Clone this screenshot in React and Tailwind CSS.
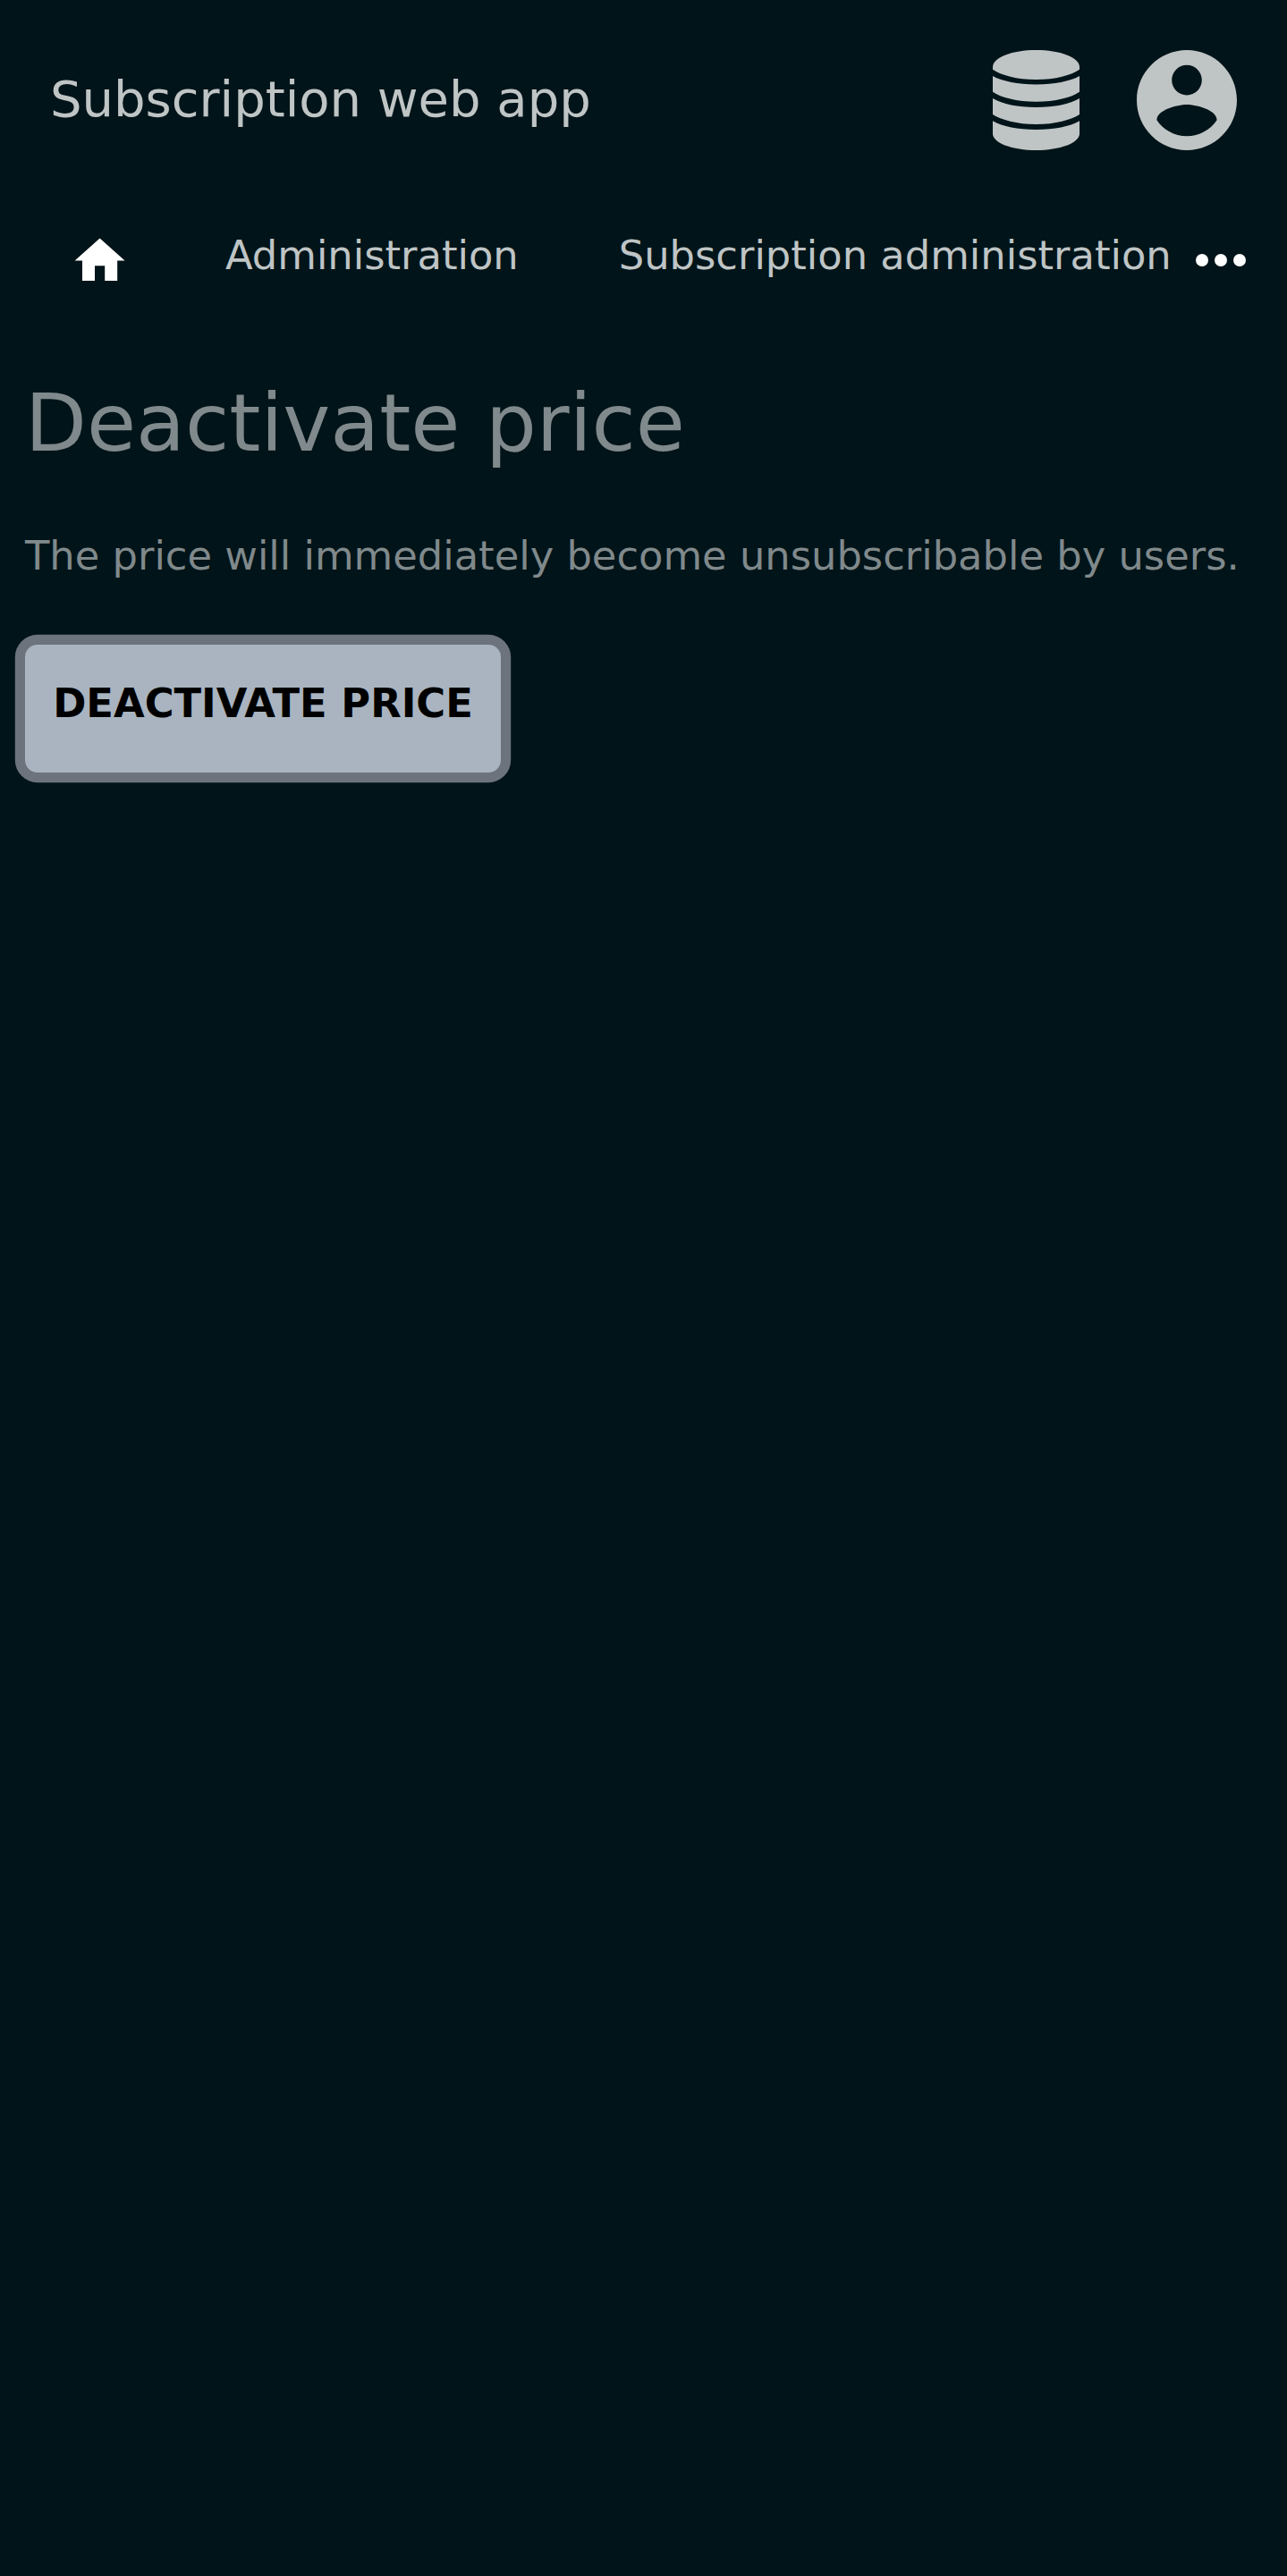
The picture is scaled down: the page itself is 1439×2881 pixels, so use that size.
export default function App() {
  return (
    <div className="h-[2881px] w-full overflow-hidden bg-[#001419] font-['DejaVu_Sans',sans-serif] text-[44.8px] leading-[67.2px] text-[#80898b]">
      <header className="flex h-[224px] items-center justify-between px-[56px] text-[#bfc4c5]">
        <span className="mb-[4px] text-[56px] leading-[67px]">Subscription web app</span>
        <div className="flex items-center gap-[64px]">
          <svg className="h-[112px] w-[97px]" viewBox="0 0 97 112" fill="currentColor">
            <path d="M0 19C0 8 22 0 48.5 0S97 8 97 19V21.7C88 28 70 33 48.5 33S9 28 0 21.7Z" />
            <path d="M0 29C11 35 28 38.4 48.5 38.4S86 35 97 29V46.7C88 53 70 57.7 48.5 57.7S9 53 0 46.7Z" />
            <path d="M0 54C11 60.5 28 64 48.5 64S86 60.5 97 54V72C88 78 70 83 48.5 83S9 78 0 72Z" />
            <path d="M0 79.3C11 85.5 28 89 48.5 89S86 85.5 97 79.3V93.5C97 104 75 112 48.5 112S0 104 0 93.5Z" />
          </svg>
          <svg className="size-[112px]" viewBox="2 2 20 20" fill="currentColor">
            <path d="M12 2C6.48 2 2 6.48 2 12s4.48 10 10 10 10-4.48 10-10S17.52 2 12 2zm0 3c1.66 0 3 1.34 3 3s-1.34 3-3 3-3-1.34-3-3 1.34-3 3-3zm0 14.2c-2.5 0-4.71-1.28-6-3.22.03-1.99 4-3.08 6-3.08 1.99 0 5.97 1.09 6 3.08-1.29 1.94-3.5 3.22-6 3.22z" />
          </svg>
        </div>
      </header>
      <nav className="flex h-[134px] items-center pr-[32px] pl-[78.4px] text-[#bfc4c5]">
        <svg className="mt-[2px] size-[67.2px] text-white" viewBox="0 0 24 24" fill="currentColor">
          <path d="M10 20v-6h4v6h5v-8h3L12 3 2 12h3v8z" />
        </svg>
        <span className="mb-[11px] ml-[106.4px]">Administration</span>
        <span className="mb-[11px] ml-[112px] whitespace-nowrap">Subscription administration</span>
        <svg className="ml-auto size-[84px] shrink-0 text-white" viewBox="0 0 24 24" fill="currentColor">
          <circle cx="6" cy="12" r="2" />
          <circle cx="12" cy="12" r="2" />
          <circle cx="18" cy="12" r="2" />
        </svg>
      </nav>
      <main className="px-[28px] pt-[61px]">
        <h1 className="text-[89.6px] leading-[108px]">Deactivate price</h1>
        <p className="mt-[61px] whitespace-nowrap">The price will immediately become unsubscribable by users.</p>
        <button className="mt-[65.8px] flex h-[143px] w-[532px] justify-center rounded-[14px] bg-[#a9b4c0] pt-[32px] font-bold text-black ring-[11.2px] ring-[#6c737d]">
          DEACTIVATE PRICE
        </button>
      </main>
    </div>
  );
}
